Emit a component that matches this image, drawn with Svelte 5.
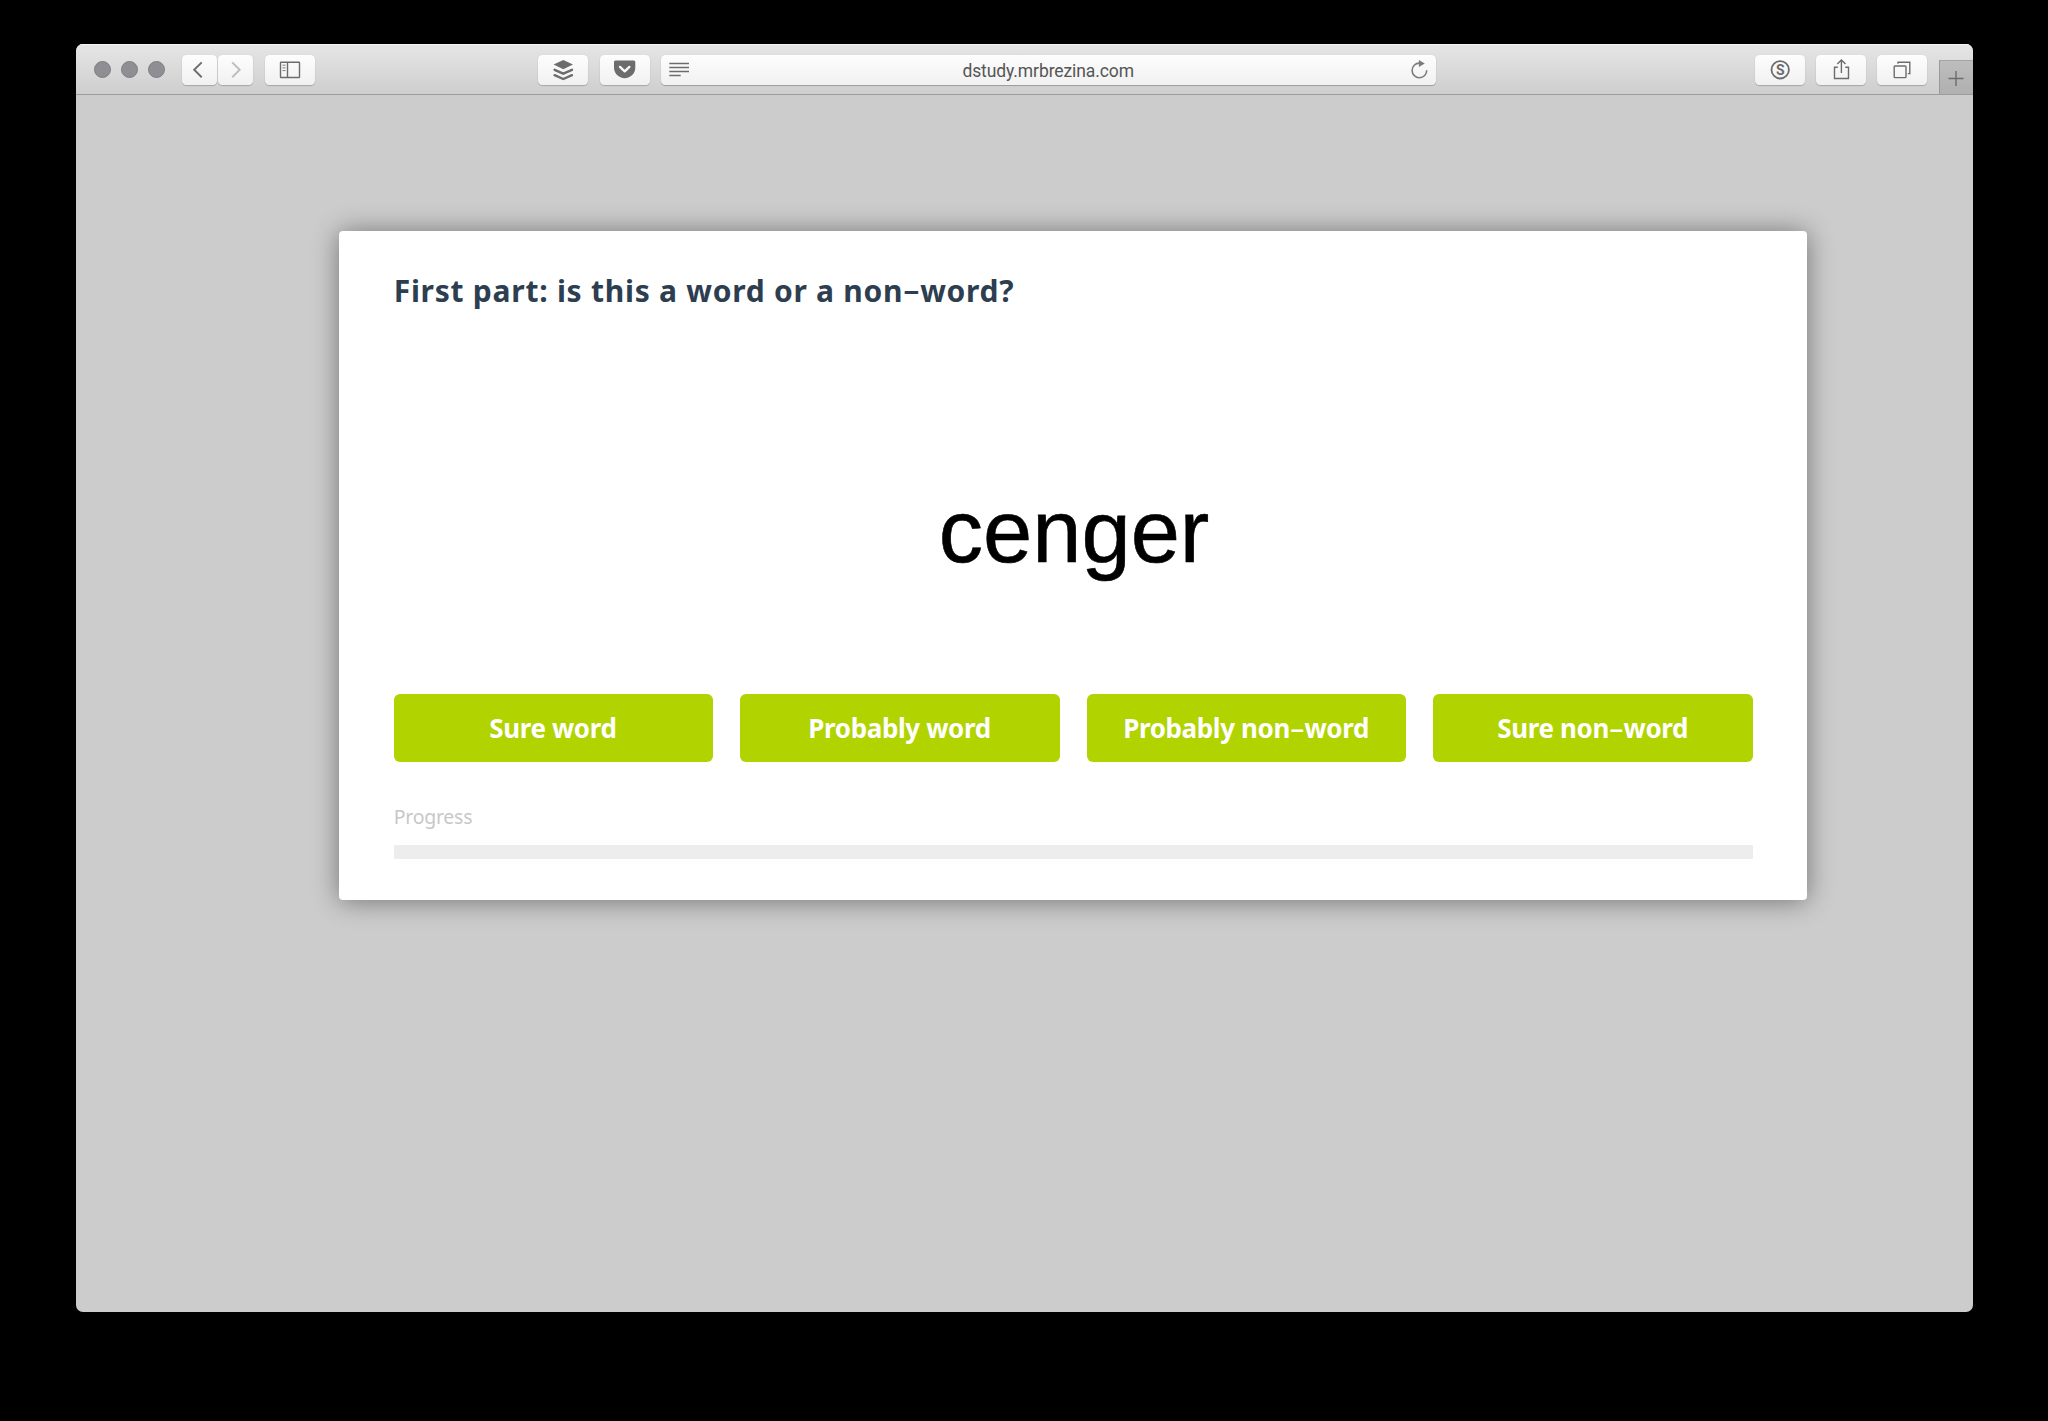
<script>
  const answers = [
    ['Sure word'],
    ['Probably word'],
    ['Probably non', 'word'],
    ['Sure non', 'word'],
  ];
</script>

<div class="desktop">
  <div class="window">
    <header class="toolbar">
      <div class="lights"><i></i><i></i><i></i></div>

      <div class="nav">
        <div class="btn half">
          <svg width="35" height="30" class="line thick"><path d="M19.7 7.4 12.2 14.8l7.5 7.4" /></svg>
        </div>
        <div class="btn half">
          <svg width="35" height="30" class="line thick faded"><path d="M14.2 7.4 21.7 14.8l-7.5 7.4" /></svg>
        </div>
      </div>

      <div class="btn sidebar">
        <svg width="50" height="30" class="line">
          <rect x="15.5" y="7.2" width="19" height="15.3" rx="0.6" />
          <path d="M22.5 7.2v15.3" />
          <path class="thin" d="M17.5 10.2h3M17.5 12.9h3M17.5 15.6h3" />
        </svg>
      </div>

      <div class="btn buffer">
        <svg width="50" height="30">
          <path class="fill" d="M25.3 5 35 9.6 25.3 14.2 15.6 9.6z" />
          <path class="band" d="M16.6 14.8 25.3 18.6l8.7-3.8M16.6 20.2 25.3 24l8.7-3.8" />
        </svg>
      </div>

      <div class="btn pocket">
        <svg width="50" height="30">
          <path class="fill" d="M15.6 5.4h18.2a1.5 1.5 0 0 1 1.5 1.5v5.6a10.65 10.65 0 0 1-21.3 0V6.9a1.5 1.5 0 0 1 1.6-1.5z" />
          <path class="tick" d="M20 11.9l4.7 4.5 4.7-4.5" />
        </svg>
      </div>

      <div class="address">
        <svg width="36" height="30" class="line"><path d="M8.3 8.5H28M8.3 12.5H28M8.3 16.5H28M8.3 20.5H19.7" /></svg>
        <span class="url">dstudy.mrbrezina.com</span>
        <svg width="36" height="30" class="line reload">
          <path d="M19.4 8.1a7.3 7.3 0 1 0 7.3 7.1" />
          <path class="fill" d="M18.9 5v7l5.9-3.6z" />
        </svg>
      </div>

      <div class="actions">
        <div class="btn">
          <svg width="50" height="30" class="line">
            <circle class="ring" cx="25.2" cy="14.8" r="8.7" />
            <text x="25.2" y="19.8">S</text>
          </svg>
        </div>
        <div class="btn">
          <svg width="50" height="30" class="line">
            <path d="M21.8 12.3h-3.3v11.2h14V12.3h-3.3M25.4 18V5.2M21.3 9.1l4.1-4.1 4.1 4.1" />
          </svg>
        </div>
        <div class="btn">
          <svg width="50" height="30" class="line">
            <rect x="17.2" y="11" width="11.8" height="11.6" rx="0.8" />
            <path d="M21 8.7V7.2h11.8v11.4h-2" />
          </svg>
        </div>
      </div>

      <div class="newtab">
        <svg width="33" height="33" class="line"><path d="M8.5 17.5h15M16 10v15" /></svg>
      </div>
    </header>

    <main class="page">
      <section class="card">
        <h1>First part: is this a word or a non<span class="dash">-</span>word?</h1>
        <div class="stimulus">cenger</div>
        <div class="answers">
          {#each answers as [head, tail]}
            <button>{head}{#if tail}<span class="dash">-</span>{tail}{/if}</button>
          {/each}
        </div>
        <div class="label">Progress</div>
        <div class="track"></div>
      </section>
    </main>
  </div>
</div>

<style>
  :global(body) {
    margin: 0;
    background: #000;
  }
  .desktop {
    box-sizing: border-box;
    width: 2048px;
    height: 1421px;
    padding: 44px 75px 109px 76px;
    background: #000;
    overflow: hidden;
  }
  .window {
    width: 1897px;
    height: 1268px;
    display: flex;
    flex-direction: column;
    border-radius: 7px;
    overflow: hidden;
    background: #ccc;
  }
  .toolbar {
    box-sizing: border-box;
    height: 51px;
    flex: none;
    display: flex;
    align-items: flex-start;
    padding: 11px 0 0 17px;
    background: linear-gradient(#e6e6e6, #cecece);
    border-bottom: 1px solid #9c9c9c;
    box-shadow: inset 0 1px #f4f4f4;
  }
  .lights {
    display: flex;
    gap: 10.2px;
    padding: 6px 0 0 0.7px;
  }
  .lights i {
    box-sizing: border-box;
    width: 17px;
    height: 17px;
    border-radius: 50%;
    background: #8f8e93;
    border: 1px solid #7f7e82;
  }
  .nav {
    display: flex;
    gap: 1px;
    margin-left: 16.6px;
  }
  .btn {
    width: 50px;
    height: 30px;
    flex: none;
    border-radius: 4.5px;
    background: linear-gradient(#fdfdfd, #f1f1f1);
    box-shadow: 0 1px 1px rgba(0, 0, 0, 0.2), 0 0 1px rgba(0, 0, 0, 0.15);
  }
  .btn.half {
    width: 35px;
  }
  .btn svg,
  .address svg,
  .newtab svg {
    display: block;
    flex: none;
  }
  .sidebar {
    margin-left: 12.5px;
  }
  .buffer {
    margin-left: 223px;
  }
  .pocket {
    margin-left: 11.5px;
  }
  .address {
    width: 775px;
    height: 30px;
    flex: none;
    margin-left: 11px;
    display: flex;
    justify-content: space-between;
    border-radius: 4.5px;
    background: linear-gradient(#fdfdfd, #f1f1f1);
    box-shadow: 0 1px 1px rgba(0, 0, 0, 0.25), 0 0 1px rgba(0, 0, 0, 0.15);
  }
  .url {
    font: 17.5px/30px Roboto, sans-serif;
    letter-spacing: -0.1px;
    color: #555;
    padding-top: 1px;
  }
  .actions {
    display: flex;
    gap: 11.1px;
    margin-left: 319px;
  }
  .newtab {
    box-sizing: border-box;
    height: 34px;
    width: 34px;
    margin: 5px 0 0 auto;
    border-left: 1px solid #9a9a9a;
    border-top: 1px solid #a5a5a5;
    background: linear-gradient(#bdbdbd, #b0b0b0);
  }
  .line {
    fill: none;
    stroke: #6c6c6c;
    stroke-width: 1.4;
  }
  .thick {
    stroke-width: 1.9;
  }
  .faded {
    stroke: #bdbdbd;
  }
  .thin {
    stroke-width: 0.9;
  }
  .ring {
    stroke-width: 1.8;
  }
  .line text {
    font: 700 14px Roboto, sans-serif;
    text-anchor: middle;
    fill: #6c6c6c;
    stroke: none;
  }
  .fill {
    fill: #6c6c6c;
    stroke: none;
  }
  .band {
    fill: none;
    stroke: #6c6c6c;
    stroke-width: 2.4;
    stroke-linecap: round;
  }
  .tick {
    fill: none;
    stroke: #fafafa;
    stroke-width: 2.3;
    stroke-linecap: round;
    stroke-linejoin: round;
  }
  .reload {
    stroke: #7c7c7c;
    stroke-width: 1.6;
  }
  .reload .fill {
    fill: #7c7c7c;
  }

  .page {
    flex: 1;
    padding: 136px 0 0 263.3px;
    font-family: 'Noto Sans', sans-serif;
  }
  .card {
    box-sizing: border-box;
    width: 1468px;
    height: 668.5px;
    padding: 40px 54.4px 0;
    display: flex;
    flex-direction: column;
    border-radius: 4px;
    background: #fff;
    box-shadow: 0 1px 27px rgba(0, 0, 0, 0.44);
  }
  h1 {
    margin: 0;
    font-size: 30px;
    line-height: 40px;
    font-weight: 700;
    letter-spacing: 0.74px;
    color: #2c3e50;
  }
  .dash {
    display: inline-block;
    width: 0.56em;
    text-align: center;
    transform: scaleX(1.7) scaleY(0.75);
    letter-spacing: 0;
  }
  .stimulus {
    box-sizing: border-box;
    height: 383px;
    padding: 171px 0 0 1.5px;
    font: 88.5px/100px 'Liberation Sans', Arial, sans-serif;
    text-align: center;
    color: #000;
    -webkit-text-stroke: 0.6px #000;
  }
  .answers {
    display: grid;
    grid-template-columns: repeat(4, 1fr);
    gap: 27.2px;
  }
  button {
    height: 68px;
    padding: 0 1px 1px 0;
    border: 0;
    border-radius: 6px;
    background: #b1d300;
    color: #fff;
    font: 700 26px/36px 'Noto Sans', sans-serif;
    letter-spacing: -0.38px;
  }
  .label {
    margin-top: 40.5px;
    font-size: 19.5px;
    line-height: 28px;
    letter-spacing: -0.25px;
    color: #c8c8c8;
  }
  .track {
    margin-top: 14.5px;
    height: 14px;
    background: #ededed;
  }
</style>
